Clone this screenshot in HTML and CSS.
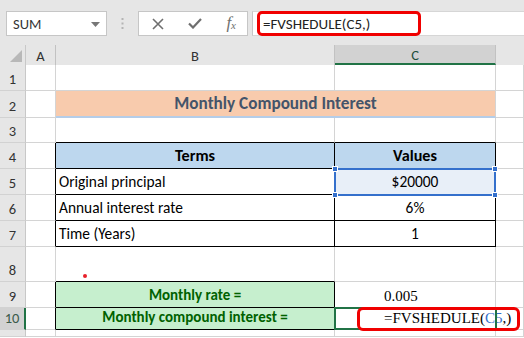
FILE: index.html
```html
<!DOCTYPE html>
<html>
<head>
<meta charset="utf-8">
<link rel="stylesheet" href="styles.css">
</head>
<body>
<div class="toolbar">
  <div class="namebox">
    <span>SUM</span>
    <svg class="dd" width="9" height="5" viewBox="0 0 9 5"><path d="M0 0H9L4.5 5Z" fill="#777"/></svg>
  </div>
  <div class="sep">
    <svg width="3" height="11" viewBox="0 0 3 11"><rect x="0.5" y="0" width="2" height="2" fill="#b4b4b4"/><rect x="0.5" y="4.5" width="2" height="2" fill="#b4b4b4"/><rect x="0.5" y="9" width="2" height="2" fill="#b4b4b4"/></svg>
  </div>
  <div class="fxbox">
    <svg width="12" height="12" viewBox="0 0 12 12"><path d="M1 1L11 11M11 1L1 11" stroke="#6f6f6f" stroke-width="1.6" fill="none"/></svg>
    <svg width="14" height="11" viewBox="0 0 14 11"><path d="M1 5.5L5 9.5L13 1" stroke="#6f6f6f" stroke-width="2.2" fill="none"/></svg>
    <span class="fx">f<sub>x</sub></span>
  </div>
  <div class="formula">
    <div class="fbox">=FVSHEDULE(C5,)</div>
  </div>
</div>
<div class="sheet">
  <!-- header -->
  <div class="corner"><svg width="12" height="12" viewBox="0 0 12 12"><path d="M12 0V12H0Z" fill="#b8b8b8"/></svg></div>
  <div class="ch">A</div>
  <div class="ch">B</div>
  <div class="ch ch-sel">C</div>
  <div class="ch ch-last"></div>
  <!-- row 1 -->
  <div class="rh">1</div><div class="c"></div><div class="c"></div><div class="c"></div><div class="c"></div>
  <!-- row 2 -->
  <div class="rh">2</div><div class="c"></div><div class="c title">Monthly Compound Interest</div><div class="c"></div>
  <!-- row 3 -->
  <div class="rh">3</div><div class="c"></div><div class="c bb-k"></div><div class="c bb-k"></div><div class="c"></div>
  <!-- row 4 -->
  <div class="rh">4</div><div class="c br-k"></div><div class="c hdr br-k bb-k">Terms</div><div class="c hdr br-k bb-k">Values</div><div class="c"></div>
  <!-- row 5 -->
  <div class="rh">5</div><div class="c br-k"></div><div class="c left br-k bb-k">Original principal</div><div class="c mid br-k bb-k sel-ref">$20000<span class="refbox"><i class="h h1"></i><i class="h h2"></i><i class="h h3"></i><i class="h h4"></i></span></div><div class="c"></div>
  <!-- row 6 -->
  <div class="rh">6</div><div class="c br-k"></div><div class="c left br-k bb-k">Annual interest rate</div><div class="c mid br-k bb-k">6%</div><div class="c"></div>
  <!-- row 7 -->
  <div class="rh">7</div><div class="c br-k"></div><div class="c left br-k bb-k">Time (Years)</div><div class="c mid br-k bb-k">1</div><div class="c"></div>
  <!-- row 8 -->
  <div class="rh">8</div><div class="c"></div><div class="c bb-k"></div><div class="c"></div><div class="c"></div>
  <!-- row 9 -->
  <div class="rh">9</div><div class="c br-k"></div><div class="c green br-k bb-k">Monthly rate =</div><div class="c serif">0.005</div><div class="c"></div>
  <!-- row 10 -->
  <div class="rh rh-sel">10</div><div class="c br-k"></div><div class="c green br-k bb-k">Monthly compound interest =</div><div class="c serif active">=FVSHEDULE(<span class="ref">C5</span>,)<span class="caret"></span><span class="activebox"></span></div><div class="c nogrid"></div>
  <!-- row 11 -->
  <div class="rh"></div><div class="c"></div><div class="c"></div><div class="c"></div><div class="c"></div>

  <span class="dot"></span>
  <span class="redbox"></span>
</div>
</body>
</html>
```

FILE: styles.css
```css
* { box-sizing: border-box; }
html, body { margin: 0; padding: 0; }
body {
  width: 524px;
  height: 338px;
  overflow: hidden;
  background: #fff;
  font-family: Carlito, "Liberation Sans Narrow", "Liberation Sans", sans-serif;
  font-size: 15.4px;
  color: #000;
}

.toolbar {
  height: 46px;
  background: #e6e6e6;
  display: flex;
  align-items: flex-start;
  padding-top: 11px;
  border-bottom: 1px solid #dcdcdc;
}
.namebox {
  margin-left: 6px;
  width: 101px;
  height: 25px;
  background: #fff;
  border: 1px solid #c6c6c6;
  display: flex;
  align-items: center;
  justify-content: space-between;
  padding: 0 6px 0 6px;
  font-size: 14.5px;
  color: #333;
}
.namebox .dd { margin-top: 1px; }
.sep {
  width: 31px;
  height: 25px;
  display: flex;
  align-items: center;
  justify-content: center;
  padding-right: 1px;
}
.fxbox {
  width: 110px;
  height: 25px;
  background: #fff;
  border: 1px solid #c6c6c6;
  display: flex;
  align-items: center;
  justify-content: space-between;
  padding: 0 11px 0 13px;
}
.fx {
  font-family: "Liberation Serif", serif;
  font-style: italic;
  font-size: 17px;
  color: #6f6f6f;
  line-height: 1;
  margin-top: -2px;
}
.fx sub { font-size: 11px; vertical-align: -1px; }
.formula {
  margin-left: 4px;
  flex: 1;
  height: 25px;
  background: #fff;
  border-left: 1px solid #c6c6c6;
  border-top: 1px solid #d6d6d6;
  border-bottom: 1px solid #d6d6d6;
}
.fbox {
  margin-left: 4px;
  margin-top: -1px;
  width: 164px;
  height: 25px;
  border: 3px solid #f00000;
  border-radius: 5px;
  padding-left: 3px;
  display: flex;
  align-items: center;
  font-size: 15px;
  color: #222;
}

.sheet {
  position: relative;
  display: grid;
  grid-template-columns: 26px 30px 279px 161px 28px;
  grid-template-rows: 20px 26px 27px 25px 26px 26px 26px 26px 35px 26px 22px 7px;
  margin-top: -1px;
}
.corner {
  background: #e6e6e6;
  border-right: 1px solid #c8c8c8;
  display: flex;
  align-items: flex-end;
  justify-content: flex-end;
  padding: 0 3px 3px 0;
}
.ch {
  background: #e6e6e6;
  border-right: 1px solid #c2c2c2;
  display: flex;
  align-items: center;
  justify-content: center;
  font-size: 14.5px;
  color: #333;
  padding-top: 1px;
}
.ch-sel {
  background: #d2d2d2;
  border-bottom: 2px solid #217346;
  color: #1e4e3a;
  padding-top: 2px;
}
.ch-last { border-right: none; }
.rh {
  background: #e6e6e6;
  border-right: 1px solid #c8c8c8;
  border-bottom: 1px solid #d2d2d2;
  display: flex;
  align-items: flex-end;
  justify-content: center;
  padding-bottom: 2px;
  font-size: 14.5px;
  color: #333;
}
.rh-sel {
  background: #d2d2d2;
  border-right: 2px solid #217346;
  color: #3b5a4a;
}
.c {
  border-right: 1px solid #d4d4d4;
  border-bottom: 1px solid #d4d4d4;
  display: flex;
  align-items: flex-end;
  padding-bottom: 3px;
  white-space: nowrap;
}
.br-k { border-right-color: #000; }
.bb-k { border-bottom-color: #000; }
.title {
  grid-column: 3 / 5;
  background: #f8cbad;
  border-bottom: 2px solid #b4cde9;
  border-right-color: #d4d4d4;
  justify-content: center;
  align-items: center;
  padding: 0;
  font-weight: bold;
  font-size: 17.2px;
  color: #44546a;
}
.hdr {
  background: #bdd7ee;
  font-weight: bold;
  font-size: 16.2px;
  justify-content: center;
}
.left { padding-left: 3px; }
.mid { justify-content: center; }
.green {
  background: #c6efce;
  color: #006100;
  font-weight: bold;
  font-size: 15px;
  justify-content: center;
}
.serif {
  font-family: "Liberation Serif", serif;
  font-size: 15px;
  padding-left: 49px;
  padding-bottom: 2px;
}
.sel-ref {
  position: relative;
  background: #e8eff8;
}
.refbox {
  position: absolute;
  left: -1px;
  top: -1px;
  width: 162px;
  height: 28px;
  border: 2px solid #3470cc;
}
.h {
  position: absolute;
  width: 6px;
  height: 6px;
  background: #3470cc;
  border: 1px solid #fff;
}
.h1 { left: -4px; top: -4px; }
.h2 { right: -4px; top: -4px; }
.h3 { left: -4px; bottom: -4px; }
.h4 { right: -4px; bottom: -4px; }
.active {
  position: relative;
  border-right: none;
  z-index: 1;
}
.nogrid { border-bottom-color: #d4d4d4; }
.ref { color: #3470cc; }
.caret {
  display: inline-block;
  width: 1px;
  height: 17px;
  background: #000;
  margin-left: 2px;
  align-self: flex-end;
  margin-bottom: -1px;
}
.activebox {
  position: absolute;
  left: -1px;
  top: -1px;
  width: 163px;
  height: 23px;
  border: 2px solid #217346;
}
.dot {
  position: absolute;
  left: 83px;
  top: 229px;
  width: 4px;
  height: 4px;
  border-radius: 50%;
  background: #e8202a;
}
.redbox {
  position: absolute;
  left: 357px;
  top: 262px;
  width: 163px;
  height: 24px;
  border: 3px solid #f00000;
  border-radius: 6px;
  z-index: 2;
}
```
